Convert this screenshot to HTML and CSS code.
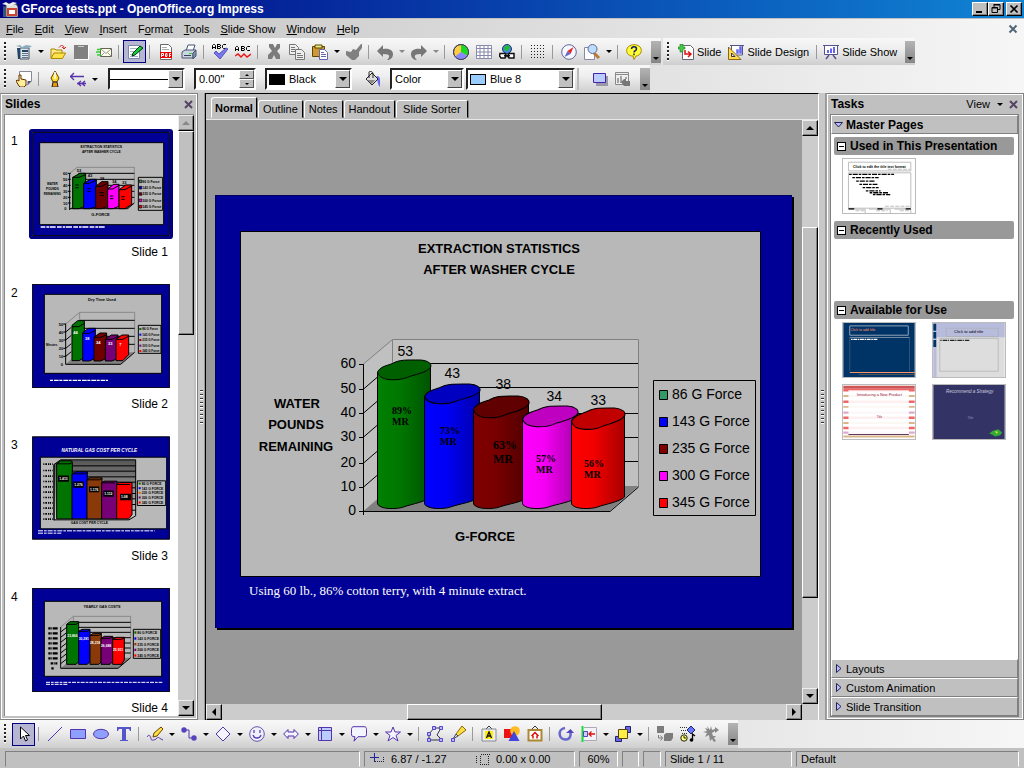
FILE: index.html
```html
<!DOCTYPE html>
<html lang="en">
<head>
<meta charset="utf-8">
<title>GForce tests.ppt - OpenOffice.org Impress</title>
<link rel="stylesheet" href="styles.css">
</head>
<body>
<div class="app">
<header class="titlebar">
  <svg class="ic" viewBox="0 0 16 16"><path d="M4 3h10l2 3v10H4z" fill="#ddd" stroke="#555"/><path d="M0 3l4-2 3 2 4-2 4 1-4 2-4 1-3-1z" fill="#eee"/><path d="M6 8h8v6H6z" fill="#fff" stroke="#c43" stroke-width="2"/><path d="M1 5v11h3V6z" fill="#357"/></svg>
  <h1>GForce tests.ppt - OpenOffice.org Impress</h1>
  <div class="winbtns">
    <button class="wb" aria-label="Minimize"><svg viewBox="0 0 12 10"><path d="M2 7h6v2H2z"/></svg></button>
    <button class="wb" aria-label="Restore"><svg viewBox="0 0 12 10"><path d="M4 .5h6v5H8M4 0v3M4 1h6M2 3.500h5.500v5H2zM2 4h6" fill="none" stroke="#000"/></svg></button>
    <button class="wb close" aria-label="Close"><svg viewBox="0 0 12 10"><path d="M2.500 1.500l7 7m0-7l-7 7" stroke="#000" stroke-width="1.700"/></svg></button>
  </div>
</header>
<nav class="menubar">
  <button><u>F</u>ile</button><button><u>E</u>dit</button><button><u>V</u>iew</button><button><u>I</u>nsert</button><button>F<u>o</u>rmat</button><button><u>T</u>ools</button><button><u>S</u>lide Show</button><button><u>W</u>indow</button><button><u>H</u>elp</button>
  <button class="docclose" aria-label="Close document"><svg width="10" height="10" viewBox="0 0 10 10"><path d="M1.500 1.500l7 7m0-7l-7 7" stroke="#567" stroke-width="2"/></svg></button>
</nav>
<div class="tbrow">
<div class="toolbar">
  <i class="grip"></i>
  <button class="tb" aria-label="New"><svg class="ic" viewBox="0 0 16 16"><path d="M4 4h9v11H4z" fill="#dde4ea" stroke="#456"/><path d="M0 2l4-1 2 2 4-2 6 1-3 2H9L6 5 4 3z" fill="#8ab"/><path d="M1 4h3v11H2zM6 6h6v2H6z" fill="#246"/><path d="M6 9.500h6M6 11.500h6M6 13.500h6" stroke="#678"/></svg></button><button class="dd" aria-label="New options"></button>
  <button class="tb" aria-label="Open"><svg class="ic" viewBox="0 0 16 16"><path d="M1 14V5h4l1 1h6v3" fill="#ffe98a" stroke="#a80"/><path d="M1 14.500L4 9h11.500l-3 5.500z" fill="#ffe24a" stroke="#a80"/><path d="M9 3.500C11 .500 14 1 14 4m-2-1l2 2 2-2" fill="none" stroke="#d22"/></svg></button>
  <button class="tb" aria-label="Save"><svg class="ic" viewBox="0 0 16 16"><path d="M2 2h15v14H2z" fill="#fff"/><path d="M1 1h14v14H1z" fill="#808080"/><path d="M5 2.500h6" stroke="#ccc"/></svg></button>
  <button class="tb" aria-label="E-mail"><svg class="ic" viewBox="0 0 16 16"><path d="M4.500 4.500h11v8h-11z" fill="#fffff0" stroke="#665"/><path d="M5 5l5 4.500L15 5M5 12l3.500-3.500M15 12l-3.500-3.500" fill="none" stroke="#998"/><path d="M1 5.500h4M0 8h4M1 11h4" stroke="#3c3" stroke-width="1.500"/></svg></button>
  <i class="sep"></i>
  <button class="tb on" aria-label="Edit file"><svg class="ic" viewBox="0 0 16 16"><path d="M1.500 1.500h11v13h-11z" fill="#fff" stroke="#78a"/><path d="M3 4.500h7M3 7.500h5M3 10.500h3M3 12.500h8" stroke="#aac"/><path d="M5 12l1-3 7-7 3 2-8 7z" fill="#1c3" stroke="#031"/></svg></button>
  <i class="sep"></i>
  <button class="tb" aria-label="Export as PDF"><svg class="ic" viewBox="0 0 16 16"><path d="M2.500.500h8l3 3v12h-11z" fill="#fff" stroke="#666"/><path d="M4 3.500h5M4 5.500h7" stroke="#aaa"/><path d="M2 8h12v6H2z" fill="#e00"/><path d="M3.500 13V9.500h2v2h-2M7.500 9.500v3M8 9.500h1v3H7.500M11.500 13V9.500H13M11 11.500h2" fill="none" stroke="#fff"/></svg></button>
  <button class="tb" aria-label="Print"><svg class="ic" viewBox="0 0 16 16"><path d="M5 7l2-6h7l-2 6z" fill="#fff" stroke="#457"/><path d="M1 8l3-2h11l-3 3v5H1z" fill="#ccd6e0" stroke="#457"/><path d="M12 9l3-3v6l-3 3z" fill="#8496aa" stroke="#457"/><path d="M3 11.500h7" stroke="#345"/><path d="M8 9h3v1H8z" fill="#3c3"/></svg></button>
  <i class="sep"></i>
  <button class="tb" aria-label="Spellcheck"><svg class="ic" viewBox="0 0 16 16"><path d="M.500 5V1.500l1-1h1l1 1V5M1 3.500h2M5.500.500H8l.500.500v1l-.500.500H5.500v2H8l.500-.500V3M5.500 0v5M14 .500h-2.500l-1 1v2l1 1H14" fill="none" stroke="#000"/><path d="M2 9l2-2 3 3 7-6 2 1-8 10z" fill="#77e" stroke="#55b"/></svg></button>
  <button class="tb" aria-label="AutoSpellcheck"><svg class="ic" viewBox="0 0 16 16"><path d="M.500 7V3.500l1-1h1l1 1V7M1 5.500h2M6.500 2.500H9l.500.500v1l-.500.500H6.500v2H9l.500-.500V5M6.500 2v5M15 2.500h-2.500l-1 1v2l1 1H15" fill="none" stroke="#000"/><path d="M0 12l3-2 3 3 3-3 3 3 4-3" fill="none" stroke="#e11" stroke-width="1.400"/></svg></button>
  <i class="sep"></i>
  <button class="tb" aria-label="Cut"><svg class="ic" viewBox="0 0 16 16"><path d="M3 0h4l2 4 2-4h3v4l-3 3 3 4v4h-4l-2-4-2 4H2v-4l4-4-3-4z" fill="#7c7c7c"/></svg></button>
  <button class="tb" aria-label="Copy"><svg class="ic" viewBox="0 0 16 16"><path d="M.500.500h6l3 3v7h-9z" fill="#eee" stroke="#777"/><path d="M6.500 5.500h6l3 3v7h-9z" fill="#eee" stroke="#777"/><path d="M2 3.500h4M2 5.500h4M2 7.500h4M8 9.500h4M8 11.500h6M8 13.500h6" stroke="#777"/></svg></button>
  <button class="tb" aria-label="Paste"><svg class="ic" viewBox="0 0 16 16"><path d="M.500 2.500h12v10H.500z" fill="#c93" stroke="#640"/><path d="M3 1h7v3H3z" fill="#ee8" stroke="#540"/><path d="M7.500 5.500h5l3 3v7h-8z" fill="#fff" stroke="#66a"/><path d="M9 8.500h3M9 10.500h5M9 12.500h5" stroke="#66a"/></svg></button><button class="dd" aria-label="Paste options"></button>
  <button class="tb" aria-label="Format paintbrush"><svg class="ic" viewBox="0 0 16 16"><path d="M15 0h1v4l-3 4v4l-4 4H6L0 11V7l5 1 2-3 3 1z" fill="#808080"/></svg></button>
  <i class="sep"></i>
  <button class="tb" aria-label="Undo"><svg class="ic" viewBox="0 0 16 16"><path d="M0 7l6-6v4c7-1 10 2 10 5 0 4-3 6-6 6 3-3 4-6-4-6v3z" fill="#777"/></svg></button><button class="dd dim" aria-label="Undo list"></button>
  <button class="tb" aria-label="Redo"><svg class="ic" viewBox="0 0 16 16"><path d="M16 7l-6-6v4C3 4 0 7 0 10c0 4 3 6 6 6-3-3-4-6 4-6v3z" fill="#777"/></svg></button><button class="dd dim" aria-label="Redo list"></button>
  <i class="sep"></i>
  <button class="tb" aria-label="Chart"><svg class="ic" viewBox="0 0 16 16"><circle cx="8" cy="8" r="7.500" fill="#fc4" stroke="#444"/><path d="M8 8V.500a7.500 7.500 0 0 1 6 11z" fill="#1d2"/><path d="M8 8l6 3.500A7.500 7.500 0 0 1 2 12.500z" fill="#88f"/><circle cx="8" cy="8" r="7.500" fill="none" stroke="#446"/></svg></button>
  <button class="tb" aria-label="Table"><svg class="ic" viewBox="0 0 16 16"><path d="M.500 1.500h15v13H.500zM.500 4.500h15M.500 8h15M.500 11.500h15M4 1.500v13M8 1.500v13M12 1.500v13" fill="#fff" stroke="#88a"/></svg></button>
  <button class="tb" aria-label="Hyperlink"><svg class="ic" viewBox="0 0 16 16"><circle cx="8" cy="5" r="4.500" fill="#48d" stroke="#236"/><path d="M5 3l4-2 2 2-2 4-3 0z" fill="#2b3"/><path d="M1 9.500h5l1.500 2L6 14H2l-1.500-2zM10 9.500h5v4.500h-5l-1.500-2zM5 11.800h6" fill="#fff" stroke="#111" stroke-width="1.500"/></svg></button>
  <i class="sep"></i>
  <button class="tb" aria-label="Grid"><i class="dots"></i></button>
  <i class="sep"></i>
  <button class="tb" aria-label="Navigator"><svg class="ic" viewBox="0 0 16 16"><circle cx="8" cy="8" r="7.300" fill="#f4f8ff" stroke="#669"/><path d="M12.500 3l-3 7-3-3z" fill="#e22"/><path d="M3.500 13l3-6 3 3z" fill="#66c"/></svg></button>
  <button class="tb" aria-label="Zoom"><svg class="ic" viewBox="0 0 16 16"><path d="M.500 3.500h10v12H.500z" fill="#fff" stroke="#88a"/><path d="M10 9l5 5" stroke="#b73" stroke-width="3"/><circle cx="8.500" cy="5" r="4.500" fill="#bdf" stroke="#668"/></svg></button><button class="dd" aria-label="Zoom options"></button>
  <i class="sep"></i>
  <button class="tb" aria-label="Help"><svg class="ic" viewBox="0 0 16 16"><path d="M8 .700c4 0 7.300 2 7.300 5.800S12 12 10 12l-2 3.500L7 12C3 12 .700 10 .700 6.500S4 .700 8 .700z" fill="#ff3" stroke="#a80"/><path d="M5.500 5c0-3 5-3 5 0 0 2-2.500 1.500-2.500 3.500M8 9.500v1.700" fill="none" stroke="#226" stroke-width="1.500"/></svg></button>
  <button class="more" aria-label="Toolbar options"></button>
</div>
<div class="toolbar">
  <i class="grip"></i>
  <button class="tt"><svg class="ic" viewBox="0 0 16 16"><path d="M4.500 1.500h8l3 3v11h-11z" fill="#fff" stroke="#667"/><path d="M0 3h2V0h3v3h2v2H5v3H2V5H0z" fill="#4c4" stroke="#272" stroke-width=".6"/><path d="M7 6v4h5M10 7.500l3 2.500-3 3" fill="none" stroke="#d11" stroke-width="1.500"/></svg>Slide</button>
  <button class="tt"><svg class="ic" viewBox="0 0 16 16"><path d="M2 1.500h14M3.500 2v9h11V2" fill="#fff" stroke="#558"/><path d="M9 9V6h1v3zM12 9V3h1v6z" stroke="#66e" stroke-width="1.500"/><path d="M.500 3v12.500H13z" fill="#fd4" stroke="#862"/><path d="M3.500 9v3.500H7z" fill="#eef" stroke="#336"/></svg>Slide Design</button>
  <i class="sep"></i>
  <button class="tt last"><svg class="ic" viewBox="0 0 16 16"><path d="M0 1.500h16M1.500 2v8.500h13V2" fill="#fff" stroke="#558"/><path d="M5 9V6M8 9V4.500M11 9V3" stroke="#66e" stroke-width="2"/><path d="M3 15l3-4M13 15l-3-4" stroke="#558" stroke-width="1.500"/></svg>Slide Show</button>
  <button class="more" aria-label="Presentation toolbar options"></button>
</div>
</div>
<div class="tbrow second">
<div class="toolbar">
  <i class="grip"></i>
  <button class="tb" aria-label="Styles"><svg class="ic" viewBox="0 0 16 16"><path d="M3.500.500h12V10l-4 4h-8z" fill="#fff" stroke="#889"/><path d="M15.500 10h-4v4z" fill="#557"/><path d="M3 15l-3-5 1-1 2 1V4h2v4l5 1v5l-2 2H4z" fill="#fe9" stroke="#630"/></svg></button>
  <i class="sep"></i>
  <button class="tb" aria-label="Line"><svg class="ic" viewBox="0 0 16 16"><path d="M8 0l4 7-2 4H6L4 7z" fill="#fd3" stroke="#640"/><path d="M8 1v7" stroke="#fff" stroke-width="1.500"/><path d="M6 11h4l1 5H5z" fill="#e90" stroke="#223"/></svg></button>
  <button class="tb" aria-label="Arrow style"><svg class="ic" viewBox="0 0 16 16"><path d="M0 5.500h14M4 2L.500 5.500 4 9M7 12.500h9M11 10l-3 2.500 3 2.500M15 10l-3 2.500 3 2.500" fill="none" stroke="#53a" stroke-width="1.300"/></svg></button><button class="dd" aria-label="Arrow style options"></button>
  <div class="combo w-line"><select class="lineselect" aria-label="Line style"><option>Continuous</option></select><i class="cb"></i></div>
  <div class="combo w-num"><input type="text" value='0.00"' aria-label="Line width"><span class="spin"><button aria-label="Increase" class="up"></button><button aria-label="Decrease" class="down"></button></span></div>
  <div class="combo w-black"><i class="sw black"></i><select aria-label="Line color"><option>Black</option></select><i class="cb"></i></div>
  <button class="tb bucket" aria-label="Area"><svg class="ic" viewBox="0 0 16 16"><path d="M12 5c4 0 3 5 3 11-3-3-2-8-4-9z" fill="#66e"/><path d="M1 8l6-6 6 6-6 6z" fill="#ddd" stroke="#222"/><path d="M2 9h8l-3 4z" fill="#888"/><path d="M4 7V1.500c0-2 4-1 4 1V7" fill="none" stroke="#222"/></svg></button>
  <div class="combo w-color"><select aria-label="Area style"><option>Color</option></select><i class="cb"></i></div>
  <div class="combo w-blue"><i class="sw blue"></i><select aria-label="Area color"><option>Blue 8</option></select><i class="cb"></i></div>
  <i class="sep wide"></i>
  <button class="tb" aria-label="Shadow"><svg class="ic" viewBox="0 0 16 16"><path d="M4 5h12v10H4z" fill="#99a"/><path d="M1.500 2.500h12v9h-12z" fill="#bcf" stroke="#42a"/></svg></button>
  <button class="tb" aria-label="Interaction"><svg class="ic" viewBox="0 0 16 16"><path d="M.500 1.500h13v12H.500zM0 3.500h14" fill="#eee" stroke="#888"/><path d="M3 12V7M6 12V5M11 8V6" stroke="#888" stroke-width="1.500"/><path d="M9 8h2v2h4v5H9l-3-4z" fill="#777"/></svg></button>
  <button class="more" aria-label="Line and fill options"></button>
</div>
</div>

<main class="main">
<section class="panel slides">
  <header class="phead"><h2>Slides</h2><button aria-label="Close slides panel"><svg width="9" height="9" viewBox="0 0 9 9"><path d="M1 1l7 7m0-7L1 8" stroke="#546" stroke-width="2"/></svg></button></header>
  <div class="slidebox">
  <ol class="slist">
    <li><span>1</span><figure>
      <svg class="thumb sel" viewBox="96 36 414 312" font-family="Liberation Sans" font-size="12" font-weight="bold">
        <path d="M97 37h412v310H97z" fill="#000096" stroke="#000" stroke-width="3"/><path d="M119 68h372v246H119z" fill="#b8b8b8" stroke="#000" stroke-width="3"/>
        <g font-size="10"><text x="304" y="83" text-anchor="middle">EXTRACTION STATISTICS</text><text x="304" y="98" text-anchor="middle">AFTER WASHER CYCLE</text></g>
        <path d="M209 160l22-18h172v107" fill="none" stroke="#888" stroke-width="3"/><path d="M209 266l22-17h172l-20 17z" fill="#808080"/>
        <path d="M235 160h168M235 178h168M235 196h168M235 214h168M235 232h168M209 160v110M204 160h8M204 178h8M204 196h8M204 214h8M204 232h8M204 249h8M209 266h174l20-17" fill="none" stroke="#000" stroke-width="3"/>
        <g stroke="#000" stroke-width="3"><path d="M218 172l22-12h17v98l-20 8h-19z" fill="#007400"/><path d="M251 190l20-12h18v82l-20 6h-18z" fill="#00f"/><path d="M287 199l18-14h19v75l-20 6h-17z" fill="#700000"/><path d="M323 207l18-14h16v66l-18 7h-16z" fill="#f0f"/><path d="M357 209l20-14h18v58l-20 13h-18z" fill="#f00"/><path d="M218 172h19l20-8M251 190h18l20-9M287 199h17l20-10M323 207h16l18-11M357 209h18l20-11" fill="none"/></g>
        <g><text x="230" y="156">53</text><text x="263" y="171">43</text><text x="299" y="180">38</text><text x="336" y="188">34</text><text x="366" y="192">33</text><text x="274" y="288">G-FORCE</text><text x="189" y="165">60</text><text x="189" y="183">50</text><text x="189" y="201">40</text><text x="189" y="219">30</text><text x="189" y="237">20</text><text x="189" y="254">10</text><text x="193" y="271">0</text></g>
        <g font-size="9" text-anchor="middle"><text x="157" y="194">WATER</text><text x="157" y="209">POUNDS</text><text x="157" y="224">REMAINING</text></g>
        <path d="M226 195h10M226 203h10M262 206h10M262 214h10M298 218h14M300 226h12M330 228h10M330 236h10M364 230h10M364 238h10" stroke="#000" stroke-width="3"/>
        <path d="M415 172h73v99h-73z" fill="none" stroke="#000" stroke-width="3"/><g font-size="10"><text x="427" y="188">86 G Force</text><text x="427" y="207">143 G Force</text><text x="427" y="226">235 G Force</text><text x="427" y="245">300 G Force</text><text x="427" y="264">345 G Force</text></g>
        <g stroke="#000" stroke-width="2"><path d="M418 180h7v8h-7z" fill="#396"/><path d="M418 199h7v8h-7z" fill="#00f"/><path d="M418 218h7v8h-7z" fill="#800"/><path d="M418 237h7v8h-7z" fill="#f0f"/><path d="M418 256h7v8h-7z" fill="#f00"/></g>
        <path d="M122 321h196" stroke="#fff" stroke-width="5" stroke-dasharray="14 3 8 2 18 4"/>
      </svg><figcaption>Slide 1</figcaption></figure></li>
    <li><span>2</span><figure>
      <svg class="thumb" viewBox="96 492 414 312" font-family="Liberation Sans" font-size="12" font-weight="bold">
        <path d="M97 493h412v310H97z" fill="#000096" stroke="#000" stroke-width="3"/><path d="M133 523h352v237H133z" fill="#b8b8b8" stroke="#000" stroke-width="3"/>
        <text x="306" y="543" text-anchor="middle">Dry Time Used</text>
        <path d="M197 612l42-35h165v120M239 577v30" fill="none" stroke="#888" stroke-width="3"/><path d="M197 733l42-36h165l-42 36z" fill="#808080"/>
        <path d="M240 601h164M240 625h164M240 649h164M240 673h164M197 612v121h165l42-36M190 612h8M190 636h8M190 660h8M190 685h8M190 709h8M197 636l17-14M197 660l17-14M197 685l17-14M197 709l17-14" fill="none" stroke="#000" stroke-width="3"/>
        <g stroke="#000" stroke-width="3"><path d="M216 616l17-14h20v110l-16 10h-21z" fill="#007400"/><path d="M248 638l18-13h20v90l-18 8h-20z" fill="#00f"/><path d="M282 651l18-12h20v76l-18 8h-20z" fill="#700000"/><path d="M316 658l18-13h20v70l-18 8h-20z" fill="#707"/><path d="M348 658l18-13h20v59l-18 18h-20z" fill="#f00"/><path d="M216 620h20l17-10M248 640h20l18-8M282 652h20l18-8M316 658h20l18-9M348 658h20l18-9" fill="none"/></g>
        <g fill="#fff"><text x="220" y="642">44</text><text x="255" y="660">38</text><text x="288" y="673">34</text><text x="324" y="676">33</text><text x="358" y="679">7</text></g>
        <g><text x="138" y="678" font-size="9">Minutes</text><text x="176" y="618">50</text><text x="176" y="642">40</text><text x="176" y="666">30</text><text x="176" y="691">20</text><text x="176" y="715">10</text><text x="182" y="739">0</text></g>
        <path d="M415 616h68v84h-68z" fill="none" stroke="#000" stroke-width="3"/><g font-size="9"><text x="427" y="631">86 G Force</text><text x="427" y="648">143 G Force</text><text x="427" y="664">235 G Force</text><text x="427" y="681">300 G Force</text><text x="427" y="697">345 G Force</text></g>
        <path d="M418 624h6v6h-6z" fill="#060"/><path d="M418 641h6v6h-6z" fill="#00f"/><path d="M418 657h6v6h-6z" fill="#800"/><path d="M418 674h6v6h-6z" fill="#707"/><path d="M418 690h6v6h-6z" fill="#f00"/>
        <path d="M150 781h174" stroke="#fff" stroke-width="4" stroke-dasharray="9 3 14 2"/>
      </svg><figcaption>Slide 2</figcaption></figure></li>
    <li><span>3</span><figure>
      <svg class="thumb" viewBox="96 108 414 309" font-family="Liberation Sans" font-size="12" font-weight="bold">
        <defs><linearGradient id="wall" x2="0" y2="1"><stop stop-color="#555"/><stop offset="1" stop-color="#ccc"/></linearGradient></defs>
        <path d="M97 109h412v307H97z" fill="#000096" stroke="#000" stroke-width="3"/><path d="M121 170h379v215H121z" fill="#b8b8b8" stroke="#000" stroke-width="3"/>
        <text x="298" y="153" text-anchor="middle" fill="#fff" font-size="14" font-style="italic">NATURAL GAS COST PER CYCLE</text>
        <path d="M162 192l20-14h225v168l-20 12H162z" fill="url(#wall)" stroke="#000" stroke-width="3"/><path d="M190 196h217M190 212h217M190 229h217M190 245h217M190 262h217M190 279h217M190 295h217M190 312h217M190 329h217M162 192v168" stroke="#000" stroke-width="3"/>
        <path d="M130 191h28M130 210h28M130 227h28M130 243h28M130 259h28M130 275h28M130 291h28M130 307h28M130 323h28M130 340h28M130 356h28" stroke="#000" stroke-width="5" stroke-dasharray="3 3 5 3 4 2"/>
        <g stroke="#000" stroke-width="3"><path d="M170 190l12-9h33l2 6v168h-47z" fill="#007400"/><path d="M216 220l12-6h34v141h-46z" fill="#00f"/><path d="M261 238l6-6h39v123h-45z" fill="#8a3a08"/><path d="M305 247l8-5h38v113h-46z" fill="#707"/><path d="M350 252l8-6h38v97l-10 12h-36z" fill="#f00"/><path d="M170 190h40l7-5M216 220h40l6-4M261 238h38l7-4M305 247h40M350 252h40" fill="none"/></g>
        <path d="M174 225h33v19h-33zM220 243h31v19h-31zM267 258h31v17h-31zM310 270h31v19h-31zM360 280h33v19h-33z"/>
        <g fill="#fff" font-size="10"><text x="178" y="239">1.413</text><text x="223" y="257">1.276</text><text x="270" y="271">1.176</text><text x="313" y="284">1.112</text><text x="363" y="293">1.08</text></g><text x="212" y="371" font-size="10">GAS COST PER CYCLE</text>
        <path d="M412 241h85v74h-85z" fill="none" stroke="#000" stroke-width="3"/><g font-size="10"><text x="425" y="254">86 G FORCE</text><text x="425" y="268">143 G FORCE</text><text x="425" y="281">235 G FORCE</text><text x="425" y="296">300 G FORCE</text><text x="425" y="310">345 G FORCE</text></g>
        <path d="M416 246h6v6h-6z" fill="#060"/><path d="M416 260h6v6h-6z" fill="#00f"/><path d="M416 274h6v6h-6z" fill="#f50"/><path d="M416 288h6v6h-6z" fill="#707"/><path d="M416 303h6v6h-6z" fill="#f00"/>
        <path d="M114 391h350M114 398h70" stroke="#fff" stroke-width="3" stroke-dasharray="15 3 8 3"/>
      </svg><figcaption>Slide 3</figcaption></figure></li>
    <li><span>4</span><figure>
      <svg class="thumb" viewBox="96 561 414 312" font-family="Liberation Sans" font-size="11" font-weight="bold">
        <path d="M97 562h412v310H97z" fill="#000096" stroke="#000" stroke-width="3"/><path d="M133 601h352v225H133z" fill="#b8b8b8" stroke="#000" stroke-width="3"/>
        <text x="306" y="622" text-anchor="middle">YEARLY GAS COSTS</text>
        <path d="M182 678l38-32h172v124M220 646v30" fill="none" stroke="#888" stroke-width="3"/><path d="M182 802l38-32h172l-38 32z" fill="#808080"/>
        <path d="M222 664h170M222 679h170M222 694h170M222 710h170M222 726h170M222 741h170M222 756h170M182 678v124h172l38-32M182 693l18-14M182 709l18-14M182 724l18-14M182 740l18-14M182 756l18-14M182 772l18-14M182 788l18-14" fill="none" stroke="#000" stroke-width="3"/>
        <path d="M145 682h30M145 697h30M145 712h30M145 727h30M145 742h30M145 757h30M145 772h30M152 787h20M154 802h8" stroke="#000" stroke-width="7" stroke-dasharray="7 2 3 2 14 2"/>
        <g stroke="#000" stroke-width="3"><path d="M200 670l10-8h26v120l-8 8h-28z" fill="#007400"/><path d="M236 691l10-6h24v97l-8 8h-26z" fill="#00f"/><path d="M270 703l10-6h24v85l-8 8h-26z" fill="#8a3a08"/><path d="M303 712l10-6h25v76l-8 8h-27z" fill="#707"/><path d="M338 715l10-6h25v68l-8 13h-27z" fill="#f00"/><path d="M200 670h28l8-5M236 691h26l8-5M270 703h26l8-4M303 712h27l8-5M338 715h27l8-5" fill="none"/></g>
        <g fill="#fff" font-size="10"><text x="202" y="708">33,866</text><text x="236" y="717">30,281</text><text x="270" y="729">28,218</text><text x="303" y="738">26,688</text><text x="339" y="750">25,911</text></g>
        <path d="M400 685h82v87h-82z" fill="none" stroke="#000" stroke-width="3"/><g font-size="10"><text x="412" y="699">86 G FORCE</text><text x="412" y="717">143 G FORCE</text><text x="412" y="734">235 G FORCE</text><text x="412" y="750">300 G FORCE</text><text x="412" y="767">345 G FORCE</text></g>
        <path d="M403 691h6v7h-6z" fill="#060"/><path d="M403 709h6v7h-6z" fill="#00f"/><path d="M403 726h6v7h-6z" fill="#930"/><path d="M403 743h6v7h-6z" fill="#707"/><path d="M403 760h6v7h-6z" fill="#f00"/>
        <path d="M138 844h349M138 850h66" stroke="#fff" stroke-width="3" stroke-dasharray="12 3 8 3"/>
      </svg><figcaption>Slide 4</figcaption></figure></li>
  </ol>
  <div class="vscroll left"><button class="sb up dim" aria-label="Scroll up"></button><i class="knob"></i><i class="rest"></i><button class="sb down" aria-label="Scroll down"></button></div>
  </div>
</section>
<div class="splitter"><i></i></div>
<section class="center">
  <div class="tabs" role="tablist"><button class="active" role="tab" aria-selected="true">Normal</button><button role="tab">Outline</button><button role="tab">Notes</button><button role="tab">Handout</button><button role="tab" class="last">Slide Sorter</button></div>
  <div class="work">
    <div class="canvas">
      <svg class="slide" viewBox="215 195 577 433" font-family="Liberation Sans">
        <defs>
          <linearGradient id="g1"><stop stop-color="#008000"/><stop offset=".4" stop-color="#007800"/><stop offset="1" stop-color="#005400"/></linearGradient>
          <linearGradient id="g2"><stop stop-color="#0000ff"/><stop offset=".4" stop-color="#0000f4"/><stop offset="1" stop-color="#0000ac"/></linearGradient>
          <linearGradient id="g3"><stop stop-color="#800000"/><stop offset=".4" stop-color="#780000"/><stop offset="1" stop-color="#500000"/></linearGradient>
          <linearGradient id="g4"><stop stop-color="#ff00ff"/><stop offset=".4" stop-color="#f400f4"/><stop offset="1" stop-color="#a800a8"/></linearGradient>
          <linearGradient id="g5"><stop stop-color="#ff0000"/><stop offset=".4" stop-color="#f40000"/><stop offset="1" stop-color="#a80000"/></linearGradient>
          <path id="cap" d="M0 13C2 7 10 6 15 4C22 0 28 .500 43 .500C50 1 55 4 53 8C49 13 38 15 32 17C24 21 3 23 0 13z"/>
        </defs>
        <path d="M215 195h577v433H215z" fill="#000096"/><path d="M215.500 628V195.500H792" fill="none" stroke="#000064"/>
        <path d="M240.500 231.500h520v345h-520z" fill="#b8b8b8" stroke="#000"/>
        <path d="M363.500 511V364l29-24.500h246V487z" fill="#c0c0c0"/>
        <path d="M363.500 511l29-25h246l-29 25z" fill="#808080"/>
        <path d="M363.500 364l29-24.500h246V487M392.500 340v30" fill="none" stroke="#808080"/>
        <path d="M430 363.500h208M479 387.500h159M560 413.500h78M600 437.500h38M600 461.500h38M359 364.500h4M359 389.500h4l29-25M359 413.500h4l29-25M359 437.500h4l29-25M359 463.500h4l29-25M359 487.500h4l29-25M359 511.500h251l28.500-24.500M363.500 364v151" fill="none" stroke="#000"/>
        <g stroke="#000">
          <path fill="url(#g1)" d="M377.500 372V504c3 6 21 5 26 3 8-3 22-5 27-10V366z"/><use href="#cap" x="377.500" y="359.500" fill="#006000"/>
          <path fill="url(#g2)" d="M424.500 396V504c3 6 21 5 26 3 8-3 24-5 29-10V390z"/><use href="#cap" transform="translate(424.500 383.500)scale(1.040 1)" fill="#0000c0"/>
          <path fill="url(#g3)" d="M473.500 410V504c3 6 21 5 26 3 8-3 24-5 29-10V402z"/><use href="#cap" transform="translate(473.500 395.500)scale(1.040 1.100)" fill="#600000"/>
          <path fill="url(#g4)" d="M522.500 418V504c3 6 21 5 26 3 8-3 24-5 29-10V412z"/><use href="#cap" transform="translate(522.500 405.500)scale(1.040 1.050)" fill="#c000c0"/>
          <path fill="url(#g5)" d="M571.500 420V504c3 6 21 5 26 3 8-3 22-5 27-10V414z"/><use href="#cap" transform="translate(571.500 407.500)scale(1 1.080)" fill="#c00000"/>
          <path d="M653.500 380.500h102v135h-102z" fill="none"/>
          <path d="M659.500 390.500h8v9h-8z" fill="#339966"/><path d="M659.500 417.500h8v9h-8z" fill="#00f"/><path d="M659.500 444.500h8v9h-8z" fill="#800000"/><path d="M659.500 471.500h8v9h-8z" fill="#f0f"/><path d="M659.500 498.500h8v9h-8z" fill="#f00"/>
        </g>
        <g class="chartb" text-anchor="middle"><text x="499" y="253">EXTRACTION STATISTICS</text><text x="499" y="274">AFTER WASHER CYCLE</text><text x="297" y="408">WATER</text><text x="296" y="429">POUNDS</text><text x="296" y="451">REMAINING</text><text x="485" y="541">G-FORCE</text></g>
        <g class="chartn" text-anchor="end"><text x="356" y="368">60</text><text x="356" y="393">50</text><text x="356" y="417">40</text><text x="356" y="441">30</text><text x="356" y="467">20</text><text x="356" y="491">10</text><text x="356" y="515">0</text><text x="413" y="356">53</text><text x="460" y="378">43</text><text x="511" y="389">38</text><text x="562" y="401">34</text><text x="606" y="405">33</text></g>
        <g class="chartn"><text x="672" y="399">86 G Force</text><text x="672" y="426">143 G Force</text><text x="672" y="453">235 G Force</text><text x="672" y="480">300 G Force</text><text x="672" y="507">345 G Force</text></g>
        <g font-family="Liberation Serif" font-weight="bold" font-size="10"><text x="392" y="414">89%</text><text x="392" y="425">MR</text><text x="440" y="434">73%</text><text x="440" y="445">MR</text><text x="536" y="462">57%</text><text x="536" y="473">MR</text><text x="584" y="467">56%</text><text x="584" y="478">MR</text><g font-size="12"><text x="493" y="449">63%</text><text x="493" y="463">MR</text></g></g>
        <text x="249" y="595" fill="#fff" font-family="Liberation Serif" font-size="13">Using 60 lb., 86% cotton terry, with 4 minute extract.</text>
      </svg>
    </div>
    <div class="vscroll right"><button class="sb up" aria-label="Scroll up"></button><i class="rest a"></i><i class="knob"></i><i class="rest b"></i><button class="sb down" aria-label="Scroll down"></button></div>
    <div class="hscroll"><button class="sb lt" aria-label="Scroll left"></button><i class="rest a"></i><i class="knob"></i><i class="rest b"></i><button class="sb rt" aria-label="Scroll right"></button></div>
  </div>
</section>
<div class="splitter"><i></i></div>
<section class="panel tasks">
  <header class="phead"><h2>Tasks</h2><button class="view">View <i class="tri"></i></button><button aria-label="Close tasks panel"><svg width="9" height="9" viewBox="0 0 9 9"><path d="M1 1l7 7m0-7L1 8" stroke="#546" stroke-width="2"/></svg></button></header>
  <div class="taskbox">
    <button class="acc open"><svg width="9" height="6" viewBox="0 0 9 6"><path d="M.500.500h8L4.500 5z" fill="#bbf" stroke="#225"/></svg>Master Pages</button>
    <div class="pages">
      <button class="sub"><i class="minus"></i>Used in This Presentation</button>
      <div class="grid one"><svg viewBox="0 0 222 168" class="mp" font-family="Liberation Sans"><path d="M0 0h222v168H0z" fill="#fff"/><path d="M16 10h194v27H16zM16 43h194v110H16zM16 156h52v12M80 156h66v12M160 156h50v12" fill="none" stroke="#bbb" stroke-width="3"/><text x="112" y="27" text-anchor="middle" font-weight="bold" font-size="11">Click to edit the title text format</text><path d="M18 48h140M28 58h82M40 69h60M50 79h56M60 89h50M70 99h46M82 105h60M92 111h54" stroke="#000" stroke-width="4" stroke-dasharray="8 3 16 3"/><path d="M16 155h18M106 155h16M194 155h16" stroke="#000" stroke-width="4"/><path d="M138 32h70M130 147h78M38 161h28M102 161h36M176 161h30" stroke="#bbb" stroke-width="3" stroke-dasharray="12 4"/></svg></div>
      <button class="sub"><i class="minus"></i>Recently Used</button>
      <div class="grid empty"></div>
      <button class="sub"><i class="minus"></i>Available for Use</button>
      <div class="grid">
        <svg viewBox="0 0 222 168" class="mp" font-family="Liberation Sans"><path d="M0 0h222v168H0z" fill="#036"/><path d="M20 9h182v29H20z" fill="none" stroke="#9ab" stroke-width="3"/><path d="M20 150V45h186v105" fill="none" stroke="#357" stroke-width="3"/><path d="M20 45h186" stroke="#9ab" stroke-width="2"/><text x="22" y="26" fill="#f96" font-size="11">Click to add title</text><path d="M24 51h84" stroke="#fff" stroke-width="4" stroke-dasharray="5 2 12 2"/><path d="M20 154h202" stroke="#f96" stroke-width="3"/><path d="M48 160h174" stroke="#555" stroke-width="3"/></svg>
        <svg viewBox="0 0 222 168" class="mp" font-family="Liberation Sans"><path d="M0 0h222v168H0z" fill="#ddd"/><path d="M0 0h222v44H10v124H0z" fill="#b8bcdc"/><path d="M0 2h9v22H0zM0 28h9v20H0zM0 53h9v22H0z" fill="#036"/><path d="M40 16h162v26H40zM20 150V48h182v102z" fill="none" stroke="#aaa" stroke-width="2"/><text x="110" y="32" text-anchor="middle" font-size="13">Click to add title</text><path d="M22 54h92" stroke="#222" stroke-width="4" stroke-dasharray="4 3 14 2"/></svg>
        <svg viewBox="0 0 222 168" class="mp" font-family="Liberation Sans"><path d="M0 0h222v168H0z" fill="#fff"/><path d="M0 7h222" stroke="#c55" stroke-width="10"/><path d="M0 16h222M0 52h222M0 102h222M0 134h222" stroke="#e66" stroke-width="8"/><path d="M0 34h222M0 68h222M0 118h222M0 160h222" stroke="#dbb58a" stroke-width="6"/><path d="M0 86h222M0 148h222" stroke="#dac" stroke-width="7"/><path d="M16 16h188v138H16z" fill="#fff" fill-opacity=".9"/><path d="M16 154h188" stroke="#535" stroke-width="3"/><text x="112" y="35" text-anchor="middle" fill="#924" font-size="12">Introducing a New Product</text><text x="104" y="104" fill="#924" font-size="9">Title</text></svg>
        <svg viewBox="0 0 222 168" class="mp" font-family="Liberation Sans"><path d="M0 0h222v168H0z" fill="#336"/><text x="113" y="24" text-anchor="middle" fill="#ccd" font-size="14" font-style="italic">Recommend a Strategy</text><text x="106" y="105" fill="#99b" font-size="10">Title</text><path d="M174 151l10-8 18-5 12 10-6 8-16 4-8-5z" fill="#3a3"/><path d="M192 143l10 3-6 6z" fill="#dd5"/></svg>
      </div>
    </div>
    <button class="acc"><svg width="6" height="9" viewBox="0 0 6 9"><path d="M.500.500v8L5 4.500z" fill="#bbf" stroke="#225"/></svg>Layouts</button>
    <button class="acc"><svg width="6" height="9" viewBox="0 0 6 9"><path d="M.500.500v8L5 4.500z" fill="#bbf" stroke="#225"/></svg>Custom Animation</button>
    <button class="acc"><svg width="6" height="9" viewBox="0 0 6 9"><path d="M.500.500v8L5 4.500z" fill="#bbf" stroke="#225"/></svg>Slide Transition</button>
  </div>
</section>
</main>

<div class="drawrow">
<div class="toolbar">
  <i class="grip"></i>
  <button class="tb on" aria-label="Select"><svg class="ic" viewBox="0 0 16 16"><path d="M4.500 1v12l3-3 2 5 2-1-2-4.500h4z" fill="#fff" stroke="#000"/></svg></button>
  <i class="sep"></i>
  <button class="tb" aria-label="Line"><svg class="ic" viewBox="0 0 16 16"><path d="M1 15L15 1" stroke="#53b"/></svg></button>
  <button class="tb" aria-label="Rectangle"><svg class="ic" viewBox="0 0 16 16"><path d="M.500 3.500h15v9H.500z" fill="#8ea0ff" stroke="#53a"/></svg></button>
  <button class="tb" aria-label="Ellipse"><svg class="ic" viewBox="0 0 16 16"><ellipse cx="8" cy="8" rx="7.500" ry="4.700" fill="#8ea0ff" stroke="#53a"/></svg></button>
  <button class="tb" aria-label="Text"><svg class="ic" viewBox="0 0 16 16"><path d="M1 5V1h14v4h-1l-1-2h-3v11h2v1H4v-1h2V3H3L2 5z" fill="#55c"/></svg></button>
  <i class="sep"></i>
  <button class="tb" aria-label="Curve"><svg class="ic" viewBox="0 0 16 16"><path d="M0 11c2-4 4 0 4 2s5 1 6-1 3 1 6 2" fill="none" stroke="#53a"/><path d="M6 11l1-4 7-6 2 2-6 7z" fill="#fd4" stroke="#640"/></svg></button><button class="dd" aria-label="Curve options"></button>
  <button class="tb" aria-label="Connector"><svg class="ic" viewBox="0 0 16 16"><path d="M3 4h5v8h5" fill="none" stroke="#53a"/><circle cx="3" cy="4" r="2.700" fill="#54b"/><circle cx="13" cy="12" r="2.700" fill="#54b"/></svg></button><button class="dd" aria-label="Connector options"></button>
  <button class="tb" aria-label="Basic shapes"><svg class="ic" viewBox="0 0 16 16"><path d="M8 1l7 7-7 7-7-7z" fill="#f4f4ff" stroke="#53a"/></svg></button><button class="dd" aria-label="Basic shapes options"></button>
  <button class="tb" aria-label="Symbol shapes"><svg class="ic" viewBox="0 0 16 16"><circle cx="8" cy="8" r="7.300" fill="#f0f0fa" stroke="#65a"/><path d="M5 4v3M11 4v3M4 9c1 4 7 4 8 0" fill="none" stroke="#54b" stroke-width="1.300"/></svg></button><button class="dd" aria-label="Symbol shapes options"></button>
  <button class="tb" aria-label="Block arrows"><svg class="ic" viewBox="0 0 16 16"><path d="M.700 8L5 3.500V6h6V3.500L15.300 8 11 12.500V10H5v2.500z" fill="#f4f4ff" stroke="#53a"/></svg></button><button class="dd" aria-label="Block arrows options"></button>
  <button class="tb" aria-label="Flowcharts"><svg class="ic" viewBox="0 0 16 16"><path d="M1.500 1.500h13v13h-13zM1.500 4.500h13M4.500 1.500v13" fill="#bcf" stroke="#53a"/></svg></button><button class="dd" aria-label="Flowcharts options"></button>
  <button class="tb" aria-label="Callouts"><svg class="ic" viewBox="0 0 16 16"><path d="M3 .700h10c2 0 2.500 1 2.500 3v4c0 2-.500 3-2.500 3H7l-4 4.500 1-4.500H3c-2 0-2.500-1-2.500-3v-4c0-2 .500-3 2.500-3z" fill="#f4f4ff" stroke="#53a"/></svg></button><button class="dd" aria-label="Callouts options"></button>
  <button class="tb" aria-label="Stars"><svg class="ic" viewBox="0 0 16 16"><path d="M8 1l2 5h5.500L11 9.500l2 5.500-5-3.500L3 15l2-5.500L.500 6H6z" fill="#f4f4ff" stroke="#53a"/></svg></button><button class="dd" aria-label="Stars options"></button>
  <i class="sep"></i>
  <button class="tb" aria-label="Points"><svg class="ic" viewBox="0 0 16 16"><path d="M7 2h7l-4 7 5 5H2V8z" fill="none" stroke="#334"/><g fill="#bbf" stroke="#54c"><path d="M5.500.500h3v3h-3zM12.500.500h3v3h-3zM.500 6.500h3v3h-3zM.500 12.500h3v3h-3zM12.500 12.500h3v3h-3z"/></g></svg></button>
  <button class="tb" aria-label="Glue points"><svg class="ic" viewBox="0 0 16 16"><path d="M6 8l6-8 4 4-8 6z" fill="#fd4" stroke="#860"/><path d="M3 13l3-5 2 2z" fill="#ddd" stroke="#446"/><path d="M1.500 12.500h3v3h-3z" fill="#bbf" stroke="#54c"/></svg></button>
  <i class="sep"></i>
  <button class="tb" aria-label="Fontwork"><svg class="ic" viewBox="0 0 16 16"><path d="M5 3l3-3 3 3" fill="none" stroke="#333"/><path d="M1 3h14v12H1z" fill="#eee" stroke="#889"/><path d="M4 5h8v8H4z" fill="#fe0"/><path d="M5.500 12L8 6l2.500 6M6.500 10h3" fill="none" stroke="#112" stroke-width="1.300"/></svg></button>
  <button class="tb" aria-label="From file"><svg class="ic" viewBox="0 0 16 16"><path d="M0 3h8v9H0z" fill="#e11"/><circle cx="11" cy="5" r="4.800" fill="#fb2"/><path d="M10 5l5.500 10h-11z" fill="#44d"/></svg></button>
  <button class="tb" aria-label="Gallery"><svg class="ic" viewBox="0 0 16 16"><path d="M5 3l3-3 3 3" fill="none" stroke="#333"/><path d="M1.500 4h13v10.500h-13z" fill="#fff" stroke="#a83" stroke-width="2"/><path d="M4.500 10L8 6.500l3.500 3.500M6 9.500v3M10 9.500v3" fill="none" stroke="#d11" stroke-width="1.500"/></svg></button>
  <i class="sep"></i>
  <button class="tb" aria-label="Rotate"><svg class="ic" viewBox="0 0 16 16"><path d="M7 2C-1 3 .500 14 8 13.500c4 0 5-4 4.500-7" fill="none" stroke="#66c" stroke-width="2.500"/><path d="M8 7l4.500-4L16 7z" fill="#54b"/></svg></button>
  <button class="tb" aria-label="Alignment"><svg class="ic" viewBox="0 0 16 16"><path d="M3 1.500h12.500v13H3" fill="#f2f2f8" stroke="#aab"/><path d="M1.500 0v16" stroke="#1d3" stroke-width="2"/><path d="M2.500 5.500h4v5h-4z" fill="#ccf" stroke="#54b"/><path d="M14 8H8M10.500 5.500L8 8l2.500 2.500" fill="none" stroke="#d11" stroke-width="1.300"/></svg></button><button class="dd" aria-label="Alignment options"></button>
  <button class="tb" aria-label="Arrange"><svg class="ic" viewBox="0 0 16 16"><path d="M10.500.500h5v6h-5zM.500 10.500h6v5h-6z" fill="#66e" stroke="#226"/><path d="M3.500 3.500h9v9h-9z" fill="#fe4" stroke="#541"/></svg></button><button class="dd" aria-label="Arrange options"></button>
  <i class="sep"></i>
  <button class="tb" aria-label="Effects"><svg class="ic" viewBox="0 0 16 16"><path d="M0 0h7v7H0zM7 9l2-2h7v5l-2 3H7z" fill="#7c7c7c"/><path d="M1.500 9v3h4M3.500 9.500l2 2.500-2 2.500" fill="none" stroke="#7c7c7c"/></svg></button>
  <button class="tb" aria-label="Animation"><svg class="ic" viewBox="0 0 16 16"><path d="M11 0l4 4-4 4-4-4z" fill="#67f" stroke="#226"/><path d="M0 1.500h7M1 4.500h6M2 7.500h6" stroke="#333" stroke-dasharray="1 1"/><circle cx="4" cy="12" r="3.200" fill="#ff7" stroke="#221"/><path d="M4 10v2h2" fill="none" stroke="#221"/><path d="M12.500 14V8l2.500 2" fill="none" stroke="#000" stroke-width="1.300"/><circle cx="11.500" cy="14" r="1.800"/></svg></button>
  <button class="tb" aria-label="Interaction"><svg class="ic" viewBox="0 0 16 16"><path d="M4 0l3 4 1-4 1 4 3-1V1l4 3-4 3V5l-3 2 1 3h3l-2 2 2 3-2 1-2-3-2 2-1-6-4 2 2-4-4-1 4-1-2-3 3 1z" fill="#888"/></svg></button>
  <button class="more" aria-label="Drawing options"></button>
</div>
</div>
<footer class="status">
  <div></div>
  <div class="pos"><svg width="15" height="12" viewBox="0 0 15 12"><path d="M4.500 0v9M0 4.500h9" stroke="#229"/><path d="M5 8.500h9M13.500 4v5" stroke="#222" stroke-dasharray="1 1"/></svg><span>6.87 / -1.27</span><svg width="15" height="12" viewBox="0 0 15 12"><path d="M1.500 3v8M6 1.500h9M5 11.500h9M5.500 3v8M13.500 3v8" stroke="#222" stroke-dasharray="1 1"/></svg><span>0.00 x 0.00</span></div>
  <div class="c">60%</div><div></div><div></div><div>Slide 1 / 11</div><div>Default</div>
</footer>
</div>
</body>
</html>
```

FILE: styles.css
```css
* { box-sizing: border-box; }
body { margin: 0; font: 11px/14px "Liberation Sans", sans-serif; color: #000; background: #c0c0c0; }
button, select, input { font: inherit; color: inherit; margin: 0; padding: 0; border: 0; background: none; border-radius: 0; }
h1, h2, ol, figure { margin: 0; padding: 0; }
i { display: block; font-style: normal; }
svg { display: block; flex: none; }
.app { height: 100vh; display: flex; flex-direction: column; overflow: hidden; }
.ic { width: 16px; height: 16px; }

.titlebar { height: 19px; flex: none; display: flex; align-items: center; gap: 3px; padding: 0 2px; color: #fff; background: linear-gradient(90deg, #000084, #1084d4); border-bottom: 1px solid #c0c0c0; }
.titlebar h1 { font-size: 12px; line-height: 16px; flex: 1; }
.winbtns { display: flex; }
.wb { width: 16px; height: 14px; display: grid; place-items: center; background: #c0c0c0; border: 1px solid; border-color: #fff #000 #000 #fff; box-shadow: inset -1px -1px #808080; }
.wb svg { width: 12px; height: 10px; }
.wb.close { margin-left: 2px; }

.menubar { height: 19px; flex: none; display: flex; align-items: center; gap: 11px; padding: 0 6px; background: linear-gradient(90deg, #c0c0c0, #f6f6f6); }
.docclose { margin-left: auto; }
.tbrow { height: 27px; flex: none; display: flex; gap: 2px; background: linear-gradient(90deg, #c0c0c0, #f6f6f6); }
.tbrow.second { height: 28px; }
.toolbar { display: flex; align-items: center; background: linear-gradient(#f8f8f8, #eee 40%, #cecece); }
.grip { flex: none; width: 2px; height: 20px; margin: 0 6px 0 4px; background: repeating-linear-gradient(#222 0 2px, #fff 2px 3px, transparent 3px 4px); }
.tb { flex: none; width: 23px; height: 23px; display: grid; place-items: center; }
.tb.on { background: #b6b6d2; border: 1px solid #000080; }
.sep { flex: none; width: 8px; height: 14px; background: linear-gradient(#999, #999) 3px 0 / 1px 100% no-repeat; }
.sep.wide { width: 13px; height: 22px; background: linear-gradient(#bbb, #bbb) 2px 0 / 2px 100% no-repeat; }
.dd { flex: none; width: 11px; height: 23px; display: grid; place-items: center; }
.dd::before, .tri, .more::before, .cb::before { content: ""; border: 3px solid transparent; border-top-color: #000; border-bottom: 0; }
.dd.dim::before { border-top-color: #888; }
.more { flex: none; width: 10px; height: 22px; margin-left: 6px; display: grid; place-items: end center; padding-bottom: 3px; background: linear-gradient(#b4b4b4, #868686); }
.dots { width: 16px; height: 16px; background: radial-gradient(#222 1px, transparent 1px) 0 0 / 3px 3px; }
.tt { display: flex; align-items: center; gap: 3px; padding: 0 4px 0 3px; white-space: nowrap; }
.tt.last { padding: 0 8px 0 2px; }
.tt + .more { margin-left: 0; }

.combo { flex: none; height: 22px; display: flex; background: #fff; border: 2px solid; border-color: #222 #fff #fff #222; margin-left: 9px; }
.combo select, .combo input { appearance: none; flex: 1; min-width: 0; padding: 0 3px; outline: 0; }
.cb { flex: none; width: 15px; display: grid; place-items: center; background: #c0c0c0; border: 1px solid; border-color: #fff #444 #444 #fff; }
.cb::before { border-width: 4px 4px 0; }
.w-line { width: 77px; margin-left: 8px; }
.w-num { width: 62px; }
.w-black { width: 87px; }
.w-color { width: 74px; margin-left: 6px; }
.w-blue { width: 109px; margin-left: 2px; }
.lineselect { color: transparent; background: linear-gradient(#000, #000) center / 100% 1px no-repeat; }
.spin { width: 15px; display: flex; flex-direction: column; }
.spin button { flex: 1; display: grid; place-items: center; background: #c0c0c0; border: 1px solid; border-color: #fff #555 #555 #fff; }
.spin button::before { content: ""; border: 2px solid transparent; }
.spin .up::before { border-bottom-color: #000; border-top: 0; }
.spin .down::before { border-top-color: #000; border-bottom: 0; }
.sw { flex: none; width: 16px; height: 11px; margin: 4px 1px 0 2px; border: 1px solid #000; }
.sw.black { background: #000; }
.sw.blue { background: #99ccff; }
.bucket { margin-left: 9px; }

.main { flex: 1; min-height: 0; display: flex; }
.panel { display: flex; flex-direction: column; flex: none; border: 1px solid #808080; border-left-color: #a0a0a0; box-shadow: inset 1px 1px #fff, inset -1px -1px #fff; background: #c0c0c0; padding: 0 3px 3px; }
.slides { width: 198px; }
.tasks { width: 198px; padding: 0 4px 2px 3px; }
.phead { height: 20px; flex: none; display: flex; align-items: center; gap: 5px; padding: 0 1px; }
.phead h2 { font-size: 12px; line-height: 14px; flex: 1; }
.view { display: flex; align-items: center; gap: 7px; margin-right: 1px; }
.slidebox { flex: 1; min-height: 0; display: flex; border-left: 1px solid #888; border-top: 1px solid #888; background: #fff; }
.slist { flex: 1; min-width: 0; list-style: none; overflow: hidden; padding-top: 17px; font-size: 12px; }
.slist li { display: flex; height: 152px; padding: 0 8px 0 6px; justify-content: space-between; }
.slist span { line-height: 18px; }
.thumb { width: 138px; height: 104px; }
.thumb.sel { border-radius: 1px; box-shadow: 0 0 0 3px #000080; }
.slist figcaption { text-align: right; line-height: 33px; padding-right: 2px; }

.vscroll { width: 16px; flex: none; display: flex; flex-direction: column; background: #ccc; }
.hscroll { height: 16px; display: flex; background: #ccc; }
.sb { flex: none; width: 16px; height: 16px; display: grid; place-items: center; background: #c0c0c0; border: 1px solid; border-color: #eee #000 #000 #eee; box-shadow: inset -1px -1px #808080; }
.sb::before { content: ""; border: 4px solid transparent; }
.sb.up::before { border-top: 0; border-bottom-color: #000; }
.sb.up.dim::before { border-bottom-color: #888; }
.sb.down::before { border-bottom: 0; border-top-color: #000; }
.sb.lt::before { border-left: 0; border-right-color: #000; }
.sb.rt::before { border-right: 0; border-left-color: #000; }
.knob { background: #c0c0c0; border: 1px solid; border-color: #fff #000 #000 #fff; box-shadow: inset -1px -1px #808080; }
.left .knob { flex: 203; }
.left .rest { flex: 368; }
.right .a { flex: 91; }
.right .knob { flex: 371; }
.right .b { flex: 90; }
.hscroll .a { flex: 186; }
.hscroll .knob { flex: 193; }
.hscroll .b { flex: 185; }

.splitter { flex: none; width: 7px; display: grid; place-items: center; background: #c8c8c8; border-right: 1px solid #999; }
.splitter i { width: 3px; height: 34px; background: repeating-linear-gradient(#333 0 1px, #fff 1px 2px, transparent 2px 4px); }
.center { flex: 1; min-width: 0; display: flex; flex-direction: column; border-top: 1px solid #000; border-left: 1px solid #000; border-right: 1px solid #fff; }
.tabs { height: 26px; flex: none; display: flex; align-items: flex-end; gap: 1px; padding: 0 5px 1px; border-bottom: 1px solid #e8e8e8; }
.tabs button { height: 18px; padding: 0 4px; border: 1px solid; border-color: #fff #000 transparent #fff; box-shadow: 1px 0 #808080; border-radius: 3px 2px 0 0; }
.tabs .active { height: 21px; padding: 0 3px; font-weight: bold; }
.tabs .last { padding: 0 6px; }
.work { flex: 1; min-height: 0; display: grid; grid-template: minmax(0, 1fr) 16px / minmax(0, 1fr) 16px; background: #ccc; }
.canvas { background: #999; display: grid; place-items: center; overflow: hidden; padding: 0 2px 2px 0; }
.slide { width: 577px; height: 433px; box-shadow: 2px 2px #000; }
.chartb { font: bold 13px "Liberation Sans", sans-serif; }
.chartn { font: 14px "Liberation Sans", sans-serif; }

.taskbox { flex: 1; min-height: 0; display: flex; flex-direction: column; background: #fff; border: 1px solid #808080; }
.acc { flex: none; height: 19px; display: flex; align-items: center; gap: 4px; padding-left: 4px; background: #c0c0c0; border: 1px solid; border-color: #fff #808080 #808080 #fff; }
.acc.open { font-weight: bold; font-size: 12px; gap: 3px; padding-left: 2px; }
.pages { flex: 1; min-height: 0; padding: 3px 4px 0 3px; overflow: hidden; }
.sub { width: 100%; height: 18px; display: flex; align-items: center; gap: 4px; padding-left: 3px; background: #999; border-radius: 2px; font-weight: bold; font-size: 12px; }
.minus { width: 9px; height: 9px; border: 1px solid #000; background: linear-gradient(#000, #000) center / 5px 1px no-repeat #fff; }
.grid { display: grid; grid-template-columns: 74px 74px; gap: 6px 16px; padding: 3px 8px 7px; }
.grid.empty { height: 62px; padding: 0; }
.mp { width: 74px; height: 56px; border: 1px solid #bbb; }

.drawrow { height: 28px; flex: none; display: flex; background: linear-gradient(90deg, #c0c0c0, #f6f6f6); }
.status { height: 20px; flex: none; display: grid; grid-template-columns: 355px 211px 39px 17px 18px 127px 1fr; gap: 4px; padding: 3px 5px 1px; background: #c0c0c0; }
.status div { border: 1px solid; border-color: #808080 #fff transparent #808080; padding-left: 4px; line-height: 15px; white-space: nowrap; overflow: hidden; }
.status .c { text-align: center; padding: 0; }
.pos { display: flex; align-items: center; gap: 6px; }
.status .pos { padding-left: 5px; }
.pos span { min-width: 78px; }
```
